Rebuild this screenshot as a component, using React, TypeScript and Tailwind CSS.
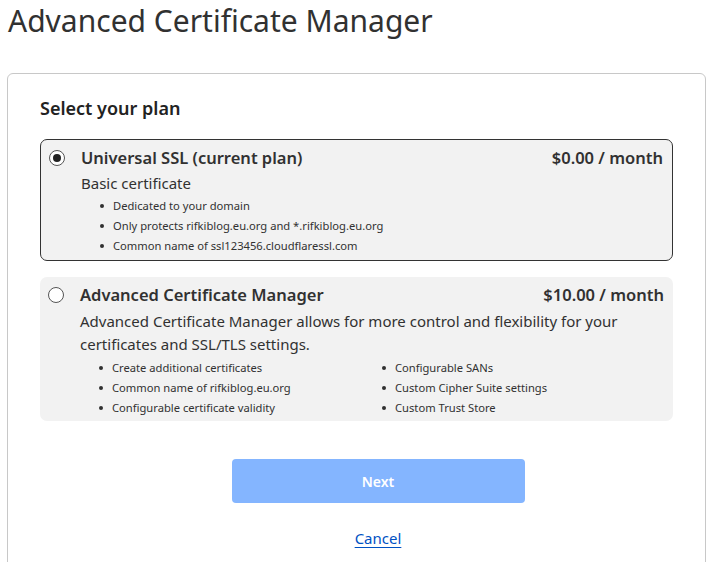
import React from 'react';

const font = { fontFamily: '"Noto Sans", "Open Sans", Arial, sans-serif' };

const Bullet = ({ children }: { children: React.ReactNode }) => (
  <li className="flex items-center h-[20px] text-[11.2px] text-[#313131]">
    <span className="w-[4px] h-[4px] rounded-full bg-[#313131] ml-[19px] mr-[9px]" />
    {children}
  </li>
);

const Radio = ({ checked }: { checked: boolean }) => (
  <span className="w-[16px] h-[16px] rounded-full border border-[#555] bg-white flex items-center justify-center shrink-0">
    {checked && <span className="w-[8px] h-[8px] rounded-full bg-[#222]" />}
  </span>
);

export default function App() {
  return (
    <div className="bg-white w-[712px] h-[562px] overflow-hidden text-[#313131]" style={font}>
      <h1 className="pl-[8px] text-[30px] font-normal leading-[41px] text-[#313131]">
        Advanced Certificate Manager
      </h1>
      <div className="mt-[32px] ml-[7px] mr-[6px] border border-[#c8c8c8] rounded-[6px] px-[32px] pt-[22px] pb-[40px]">
        <h2 className="text-[18px] font-semibold leading-[24px] text-[#222]">Select your plan</h2>
        <div className="mt-[19px] border border-[#333] rounded-[7px] bg-[#f2f2f2] pl-[8px] pr-[9px] pt-[6px] pb-[4px]">
          <div className="flex items-center">
            <Radio checked />
            <span className="ml-[16px] text-[16.5px] font-semibold leading-[24px] flex-1">Universal SSL (current plan)</span>
            <span className="text-[16.5px] font-semibold leading-[24px]">$0.00 / month</span>
          </div>
          <div className="pl-[32px] text-[15px] leading-[24px] mt-[1px]">Basic certificate</div>
          <ul className="pl-[32px] mt-[1px]">
            <Bullet>Dedicated to your domain</Bullet>
            <Bullet>Only protects rifkiblog.eu.org and *.rifkiblog.eu.org</Bullet>
            <Bullet>Common name of ssl123456.cloudflaressl.com</Bullet>
          </ul>
        </div>
        <div className="mt-[16px] rounded-[7px] bg-[#f2f2f2] pl-[8px] pr-[9px] pt-[6px] pb-[3px]">
          <div className="flex items-center">
            <Radio checked={false} />
            <span className="ml-[16px] text-[16.5px] font-semibold leading-[24px] flex-1">Advanced Certificate Manager</span>
            <span className="text-[16.5px] font-semibold leading-[24px]">$10.00 / month</span>
          </div>
          <p className="pl-[32px] text-[15px] leading-[23px] mt-[3px]">
            Advanced Certificate Manager allows for more control and flexibility for your certificates and SSL/TLS settings.
          </p>
          <div className="pl-[32px] grid grid-cols-[283px_1fr] mt-[2px]">
            <ul>
              <Bullet>Create additional certificates</Bullet>
              <Bullet>Common name of rifkiblog.eu.org</Bullet>
              <Bullet>Configurable certificate validity</Bullet>
            </ul>
            <ul>
              <Bullet>Configurable SANs</Bullet>
              <Bullet>Custom Cipher Suite settings</Bullet>
              <Bullet>Custom Trust Store</Bullet>
            </ul>
          </div>
        </div>
        <div className="flex flex-col items-center mt-[38px] pl-[43px]">
          <button className="w-[293px] h-[44px] rounded-[4px] bg-[#84b5ff] text-white text-[14px] font-semibold">
            Next
          </button>
          <a className="mt-[24px] text-[15px] text-[#0051c3] underline underline-offset-[3px]" href="#">
            Cancel
          </a>
        </div>
      </div>
    </div>
  );
}
